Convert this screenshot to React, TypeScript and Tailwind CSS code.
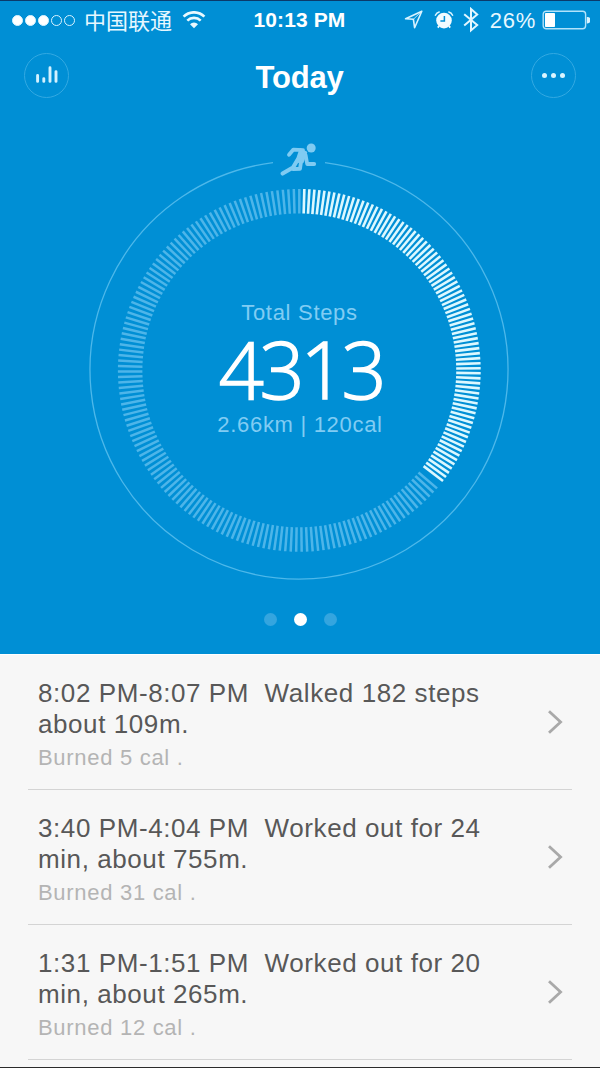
import { clsx } from "clsx";

interface Activity {
  lines: string[];
  calories: number;
}

const activities: Activity[] = [
  {
    lines: ["8:02 PM-8:07 PM  Walked 182 steps", "about 109m."],
    calories: 5,
  },
  {
    lines: ["3:40 PM-4:04 PM  Worked out for 24", "min, about 755m."],
    calories: 31,
  },
  {
    lines: ["1:31 PM-1:51 PM  Worked out for 20", "min, about 265m."],
    calories: 12,
  },
];

const DONE_TICKS = 80;
const DONE_STEP = 1.595;
const LEFT_TICKS = 133;
const LEFT_STEP = 1.738;

const doneAngles = Array.from(
  { length: DONE_TICKS },
  (_, i) => (i + 1) * DONE_STEP
);
const leftAngles = Array.from({ length: LEFT_TICKS }, (_, i) => -i * LEFT_STEP);

const SignalDots = () => (
  <div className="flex gap-[2px]">
    {[1, 2, 3, 4, 5].map((n) => (
      <span
        key={n}
        className={clsx(
          "size-[11px] rounded-full border border-[#d9f3ff]",
          n <= 3 && "bg-white"
        )}
      />
    ))}
  </div>
);

const WifiIcon = () => (
  <svg width="24" height="18" viewBox="0 0 24 18" fill="none" stroke="#e9f9ff">
    <path d="M1.6 5.6a14.8 14.8 0 0 1 20.8 0" strokeWidth="2.7" />
    <path d="M5.3 9.6a9.6 9.6 0 0 1 13.4 0" strokeWidth="2.6" />
    <path d="M8 13.2a5.8 5.8 0 0 1 8 0L12 17.3Z" fill="#e9f9ff" stroke="none" />
  </svg>
);

const LocationIcon = () => (
  <svg width="20" height="20" viewBox="0 0 20 20" fill="none">
    <path
      d="M17.8 1.2 1.6 8.8l7.8.5 1.2 8.4Z"
      stroke="#d9f3ff"
      strokeWidth="1.6"
      strokeLinejoin="round"
    />
    <path d="M17.8 1.2 9.4 9.3" stroke="#d9f3ff" strokeWidth="0.8" />
  </svg>
);

const AlarmIcon = () => (
  <svg width="20" height="20" viewBox="0 0 20 20" fill="none">
    <circle cx="10" cy="10.6" r="7.8" fill="#f2fbff" />
    <path d="M10.4 6v5H6.4" stroke="#008fd5" strokeWidth="1.5" />
    <path
      d="M1.4 5.2A6 6 0 0 1 5.2 2M18.6 5.2A6 6 0 0 0 14.8 2"
      stroke="#d9f3ff"
      strokeWidth="1.5"
      strokeLinecap="round"
    />
    <path d="m5 16-1.2 1.6M15 16l1.2 1.6" stroke="#f2fbff" strokeWidth="1.8" />
  </svg>
);

const BluetoothIcon = () => (
  <svg width="16" height="26" viewBox="0 0 16 26" fill="none">
    <path
      d="M1.2 7.2 14.2 18 8 23.4V2l6.2 5.6L1.2 18.6"
      stroke="#e3f7ff"
      strokeWidth="2"
    />
  </svg>
);

const BatteryIcon = () => (
  <svg width="48" height="20" viewBox="0 0 48 20">
    <rect
      x="1.2"
      y="1.2"
      width="42.4"
      height="17.6"
      rx="3"
      fill="none"
      stroke="#b3e3fa"
      strokeWidth="1.4"
    />
    <rect x="3" y="3" width="10" height="14" rx="0.8" fill="#fff" />
    <path d="M44.8 7h.6a2.4 2.4 0 0 1 0 6.4h-.6Z" fill="#d9f3ff" />
  </svg>
);

const StatusBar = () => (
  <div className="grid h-[40px] grid-cols-[1fr_auto_1fr] items-center border-t border-[#0a3a6b] pr-[10px] pb-px pl-3">
    <div className="flex items-center">
      <SignalDots />
      <span className="-mt-[3px] ml-[9px] font-['Noto_Sans_CJK_SC',sans-serif] text-[22px] leading-[30px] font-normal text-[#e6f7ff]">
        中国联通
      </span>
      <div className="ml-[10px]">
        <WifiIcon />
      </div>
    </div>
    <span className="-ml-[3px] text-[21px] font-bold tracking-[0.1px] text-white">
      10:13 PM
    </span>
    <div className="flex items-center justify-end">
      <LocationIcon />
      <div className="ml-[10px]">
        <AlarmIcon />
      </div>
      <div className="ml-[9px]">
        <BluetoothIcon />
      </div>
      <span className="mr-[6px] ml-[11px] text-[22px] tracking-[0.7px] text-[#e6f7ff]">
        26%
      </span>
      <BatteryIcon />
    </div>
  </div>
);

const NavBar = () => (
  <header className="flex h-[70px] items-center justify-between px-6">
    <button className="flex size-[45px] items-center justify-center rounded-full border border-[#33a9e2]">
      <svg width="24" height="20" viewBox="0 0 24 20" stroke="#d3f1ff">
        <path
          d="M2.6 10.4v6M8.8 13.6v2.8M15 2.8v13.6M21 6.6v9.8"
          strokeWidth="2.9"
          strokeLinecap="round"
        />
      </svg>
    </button>
    <h1 className="mt-[5px] -ml-px text-[31px] leading-[36px] font-bold tracking-[-0.2px] text-white">
      Today
    </h1>
    <button className="flex size-[45px] items-center justify-center gap-1 rounded-full border border-[#33a9e2]">
      <span className="size-[5px] rounded-full bg-[#d9f5ff]" />
      <span className="size-[5px] rounded-full bg-[#d9f5ff]" />
      <span className="size-[5px] rounded-full bg-[#d9f5ff]" />
    </button>
  </header>
);

const Ring = () => (
  <svg
    className="col-start-1 row-start-1"
    width="420"
    height="450"
    viewBox="89 135 420 450"
    fill="none"
  >
    <path
      d="M273 162.7A209 209 0 1 0 325 162.7"
      stroke="#4db8ea"
      strokeWidth="1.3"
    />
    {leftAngles.map((a) => (
      <path
        key={a}
        d="M299.3 189v24.5"
        stroke="#4db5e9"
        strokeWidth="2.5"
        transform={`rotate(${a} 299.3 370.4)`}
      />
    ))}
    {doneAngles.map((a) => (
      <path
        key={a}
        d="M299.3 189v24.5"
        stroke="#dcf8ff"
        strokeWidth="2.6"
        transform={`rotate(${a} 299.3 370.4)`}
      />
    ))}
    {/* runner */}
    <g stroke="#7fcbf2" strokeLinejoin="round" strokeLinecap="round">
      <circle cx="311.2" cy="148" r="4.5" fill="#7fcbf2" stroke="none" />
      <path d="m289 154.8 4.4-5.2 9.6.6" strokeWidth="3.8" />
      <path
        d="m300.5 149.5 5.5 3-3.5 9.5-6-.5Z"
        fill="#7fcbf2"
        strokeWidth="2.4"
      />
      <path d="m305.6 155 1.6 9h7" strokeWidth="3.8" />
      <path d="m297.5 160-4.5 7.5-10.4 6" strokeWidth="4.2" />
      <path d="m301 162-1 6.8-7 .2" strokeWidth="3.8" />
    </g>
  </svg>
);

const StepsDial = () => (
  <section className="mt-[25px] ml-[89px] grid w-[420px]">
    <Ring />
    <div className="col-start-1 row-start-1 flex flex-col items-center pt-[165px] text-[22px] leading-[26px] text-[#80ccf3]">
      <p className="ml-px tracking-[0.7px]">Total Steps</p>
      <p className="ml-[3px] h-[86px] font-['Open_Sans',sans-serif] text-[79px] leading-[85px] font-light tracking-[-4.2px] text-white [-webkit-text-stroke:1.5px_white]">
        4313
      </p>
      <p className="ml-[2px] tracking-[0.7px]">2.66km | 120cal</p>
    </div>
  </section>
);

const PageDots = () => (
  <div className="mt-[28px] flex justify-center gap-[17px]">
    <span className="size-[13px] rounded-full bg-[#34a5df]" />
    <span className="size-[13px] rounded-full bg-white" />
    <span className="size-[13px] rounded-full bg-[#34a5df]" />
  </div>
);

const ActivityRow = ({ lines, calories }: Activity) => (
  <li className="mx-7 flex h-[135px] items-start justify-between border-b border-[#d4d4d4] pt-[23px] pr-[9px] pl-[10px]">
    <div>
      {lines.map((line) => (
        <p
          key={line}
          className="text-[26px] leading-[31px] tracking-[0.58px] whitespace-pre text-[#585858]"
        >
          {line}
        </p>
      ))}
      <p className="mt-[5px] text-[22px] leading-[26px] tracking-[0.7px] text-[#b4b4b4]">
        {`Burned ${calories} cal .`}
      </p>
    </div>
    <svg className="mt-[31px]" width="16" height="26" viewBox="0 0 16 26">
      <path
        d="M2 2.2 13.6 13 2 23.8"
        fill="none"
        stroke="#a9a9a9"
        strokeWidth="2.8"
      />
    </svg>
  </li>
);

export default function App() {
  return (
    <div className="flex h-[1068px] w-[600px] flex-col overflow-hidden bg-[#f7f7f7] font-['Liberation_Sans',Arial,sans-serif]">
      <div className="h-[654px] bg-[#008fd5]">
        <StatusBar />
        <NavBar />
        <StepsDial />
        <PageDots />
      </div>
      <ul className="flex-1 border-t border-white">
        {activities.map((activity) => (
          <ActivityRow key={activity.lines[0]} {...activity} />
        ))}
      </ul>
      <div className="h-px bg-[#2b2b2b]" />
    </div>
  );
}
